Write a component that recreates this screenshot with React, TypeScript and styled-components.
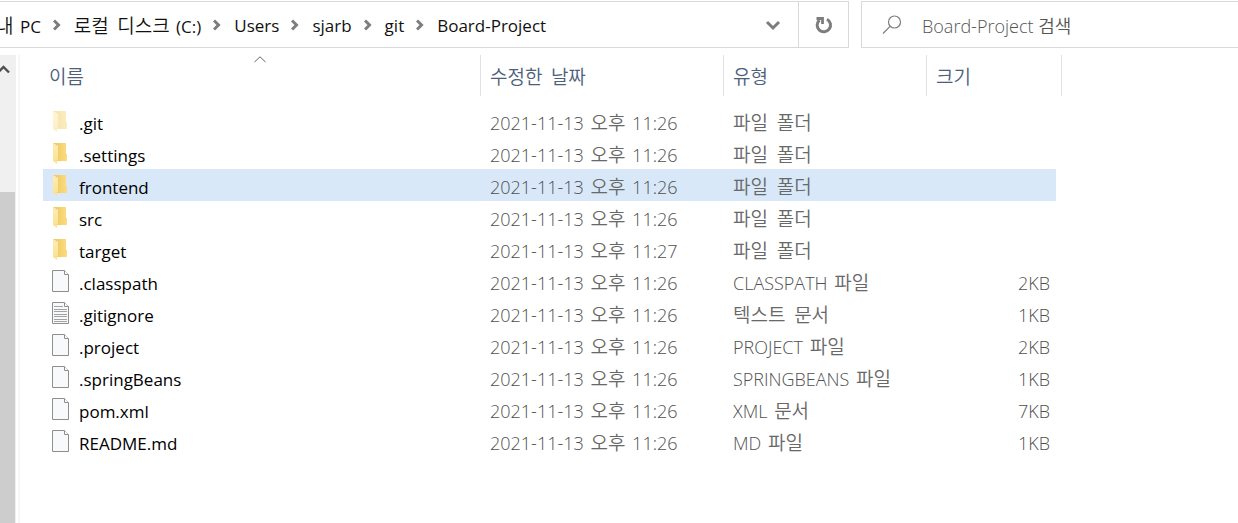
import React from 'react';
import styled, { createGlobalStyle } from 'styled-components';

const GlobalStyle = createGlobalStyle`
  *, *::before, *::after { box-sizing: border-box; }
  body {
    margin: 0;
    background: #ffffff;
    color: #000000;
    font-family: "Open Sans", "Noto Sans CJK KR", sans-serif;
    font-size: 17px;
    line-height: 24px;
  }
  button, input { font: inherit; color: inherit; }
`;

const Explorer = styled.div`
  display: flex;
  flex-direction: column;
  min-height: 100vh;
  overflow: hidden;
`;

const TopBar = styled.header`
  display: flex;
  gap: 12px;
  height: 48px;
  padding-top: 1px;
`;

const AddressBar = styled.nav`
  flex: 1;
  min-width: 0;
  display: flex;
  border: 1px solid #d9d9d9;
  border-left: 0;
`;

const Crumbs = styled.ol`
  flex: 1;
  min-width: 0;
  display: flex;
  align-items: center;
  gap: 12px;
  margin: 0 0 0 -4px;
  padding: 0;
  list-style: none;
  white-space: nowrap;
`;

const Crumb = styled.li`
  display: flex;
  align-items: center;
  gap: 13px;
`;

const CrumbLink = styled.a`
  padding-top: 2px;
  color: #111111;
  text-decoration: none;
`;

const BarButton = styled.button<{ $divided?: boolean }>`
  display: flex;
  align-items: center;
  justify-content: center;
  width: 50px;
  padding: 0;
  border: 0;
  border-left: ${(p) => (p.$divided ? '1px solid #d9d9d9' : '0')};
  background: none;
`;

const SearchBox = styled.label`
  display: flex;
  align-items: center;
  gap: 20px;
  width: 377px;
  padding-left: 20px;
  border: 1px solid #d9d9d9;
  border-right: 0;
`;

const SearchInput = styled.input`
  flex: 1;
  min-width: 0;
  padding: 3px 0 0;
  border: 0;
  outline: 0;
  background: none;
  font-size: 18px;
  font-weight: 350;
  &::placeholder { color: #555555; opacity: 1; }
`;

const Body = styled.div`
  flex: 1;
  display: flex;
  padding-top: 7px;
`;

const ScrollTrack = styled.div`
  display: flex;
  flex-direction: column;
  width: 16px;
  background: #f0f0f0;
`;

const ScrollUp = styled.button`
  display: flex;
  height: 137px;
  padding: 10px 0 0;
  border: 0;
  background: none;
`;

const ScrollThumb = styled.div`
  flex: 1;
  width: 15px;
  background: #cdcdcd;
`;

const Pane = styled.main`
  flex: 1;
  min-width: 0;
  margin-left: 2px;
  padding-left: 23px;
  border-left: 2px solid #f6f6f6;
`;

const FileTable = styled.table`
  table-layout: fixed;
  width: 1019px;
  border-collapse: separate;
  border-spacing: 0;
  tbody::before {
    content: "";
    display: block;
    height: 9px;
  }
`;

const Col = styled.col<{ $width: number }>`
  width: ${(p) => p.$width}px;
`;

const HeadCell = styled.th`
  position: relative;
  height: 41px;
  padding: 2px 0 0;
  border-right: 1px solid #e2e2e2;
  font-weight: 400;
  text-align: left;
`;

const SortButton = styled.button<{ $first?: boolean }>`
  width: 100%;
  padding: 0 0 0 ${(p) => (p.$first ? 6 : 9)}px;
  border: 0;
  background: none;
  color: #4c607a;
  text-align: left;
`;

const SortMark = styled.svg`
  position: absolute;
  top: 1px;
  left: 50%;
  margin-left: -8px;
`;

const Row = styled.tr<{ $selected?: boolean }>`
  background: ${(p) => (p.$selected ? '#d8e8f8' : 'transparent')};
`;

const Cell = styled.td`
  height: 32px;
  padding: 2px 0 0 9px;
  color: #505050;
  font-size: 18px;
  font-weight: 350;
  white-space: nowrap;
`;

const SizeCell = styled(Cell)`
  padding: 4px 6px 0 0;
  border-right: 6px solid #ffffff;
  text-align: right;
`;

const NameCell = styled(Cell)`
  color: #000000;
  font-size: 17px;
  font-weight: 400;
`;

const NameLine = styled.div`
  display: flex;
  align-items: center;
  gap: 9px;
`;

const FileName = styled.span`
  padding-top: 4px;
`;

const Hangul = styled.span<{ $before: boolean; $after: boolean }>`
  margin-left: ${(p) => (p.$before ? 2 : 0)}px;
  margin-right: ${(p) => (p.$after ? 2 : 0)}px;
  font-family: "Noto Sans CJK KR", sans-serif;
  font-size: 19px;
  font-weight: 350;
  ${Cell} & { color: #686868; }
`;

/* Hangul words are set slightly larger and looser to balance with the Latin letters. */
function Label({ text }: { text: string }) {
  const parts = text.split(/([\uac00-\ud7a3]+)/);
  return (
    <>
      {parts.map((part, i) =>
        i % 2 ? (
          <Hangul key={i} $before={parts[i - 1] !== ''} $after={parts[i + 1] !== ''}>
            {part}
          </Hangul>
        ) : (
          part
        ),
      )}
    </>
  );
}

type Kind = 'hidden' | 'folder' | 'file' | 'text';

function FileIcon({ kind }: { kind: Kind }) {
  if (kind === 'hidden' || kind === 'folder') {
    return (
      <svg width="18" height="24" viewBox="0 0 18 24" opacity={kind === 'hidden' ? 0.5 : 1} aria-hidden="true">
        <defs>
          <linearGradient id="back" x1="0" x2="1">
            <stop offset="0" stopColor="#edc75f" />
            <stop offset="1" stopColor="#fbdc80" />
          </linearGradient>
          <linearGradient id="flap" x1="0" x2="0" y1="0" y2="1">
            <stop offset="0" stopColor="#fdedb4" />
            <stop offset="1" stopColor="#fbe08d" />
          </linearGradient>
        </defs>
        <path d="M1 1H14V12H15V19H5L1 18Z" fill="url(#back)" />
        <path d="M1 1L6 4V17L5 18V22L1 19Z" fill="url(#flap)" />
      </svg>
    );
  }
  return (
    <svg width="18" height="24" viewBox="0 0 18 24" aria-hidden="true">
      <path d="M.5.5H12.500L16.500 4.500V21.500H.5Z" fill="#f7f9fa" stroke="#8e8e8e" />
      <path d="M12.500.5V4.500H16.500" fill="#ffffff" stroke="#8e8e8e" />
      {kind === 'text' && (
        <path d="M2 4.500H11M2 7.500H15M2 9.500H15M2 12.500H15M2 14.500H15M2 17.500H15M2 19.500H15" stroke="#a2a2a2" />
      )}
    </svg>
  );
}

function CrumbArrow() {
  return (
    <svg width="8" height="12" viewBox="0 0 8 12" fill="none" stroke="#7d7d7d" strokeWidth="3" aria-hidden="true">
      <path d="M1 1.500L5.500 6L1 10.500" />
    </svg>
  );
}

const crumbs = ['내 PC', '로컬 디스크 (C:)', 'Users', 'sjarb', 'git', 'Board-Project'];
const headings = ['이름', '수정한 날짜', '유형', '크기'];

const files: { name: string; kind: Kind; time: string; type: string; size?: string }[] = [
  { name: '.git', kind: 'hidden', time: '11:26', type: '파일 폴더' },
  { name: '.settings', kind: 'folder', time: '11:26', type: '파일 폴더' },
  { name: 'frontend', kind: 'folder', time: '11:26', type: '파일 폴더' },
  { name: 'src', kind: 'folder', time: '11:26', type: '파일 폴더' },
  { name: 'target', kind: 'folder', time: '11:27', type: '파일 폴더' },
  { name: '.classpath', kind: 'file', time: '11:26', type: 'CLASSPATH 파일', size: '2KB' },
  { name: '.gitignore', kind: 'text', time: '11:26', type: '텍스트 문서', size: '1KB' },
  { name: '.project', kind: 'file', time: '11:26', type: 'PROJECT 파일', size: '2KB' },
  { name: '.springBeans', kind: 'file', time: '11:26', type: 'SPRINGBEANS 파일', size: '1KB' },
  { name: 'pom.xml', kind: 'file', time: '11:26', type: 'XML 문서', size: '7KB' },
  { name: 'README.md', kind: 'file', time: '11:26', type: 'MD 파일', size: '1KB' },
];

export default function App() {
  return (
    <Explorer>
      <GlobalStyle />
      <TopBar>
        <AddressBar>
          <Crumbs>
            {crumbs.map((crumb, i) => (
              <Crumb key={crumb}>
                {i > 0 && <CrumbArrow />}
                <CrumbLink href="#"><Label text={crumb} /></CrumbLink>
              </Crumb>
            ))}
          </Crumbs>
          <BarButton aria-label="이전 위치">
            <svg width="16" height="12" viewBox="0 0 16 12" fill="none" stroke="#7d7d7d" strokeWidth="3">
              <path d="M2 3L8 9L14 3" />
            </svg>
          </BarButton>
          <BarButton $divided aria-label="새로 고침">
            <svg width="18" height="18" viewBox="0 0 18 18" fill="none" stroke="#7d7d7d">
              <path d="M12 3.200A6.700 6.700 0 1 1 4.500 4" strokeWidth="3" />
              <path d="M1.500 2.500H7.500V8" strokeWidth="2.800" />
            </svg>
          </BarButton>
        </AddressBar>
        <SearchBox>
          <svg width="20" height="20" viewBox="0 0 20 20" fill="none" stroke="#7d7d7d" strokeWidth="1.200" aria-hidden="true">
            <circle cx="12.500" cy="7" r="6" />
            <path d="M8.300 11.200L1 18.500" />
          </svg>
          <SearchInput type="text" aria-label="검색" placeholder="Board-Project 검색" />
        </SearchBox>
      </TopBar>
      <Body>
        <ScrollTrack>
          <ScrollUp aria-label="위로 스크롤">
            <svg width="10" height="9" viewBox="0 0 10 9" fill="none" stroke="#505050" strokeWidth="2.400">
              <path d="M-2 7.500L3.500 2L9 7.500" />
            </svg>
          </ScrollUp>
          <ScrollThumb />
        </ScrollTrack>
        <Pane>
          <FileTable>
            <colgroup>
              <Col $width={438} />
              <Col $width={243} />
              <Col $width={203} />
              <Col $width={135} />
            </colgroup>
            <thead>
              <tr>
                {headings.map((heading, i) => (
                  <HeadCell key={heading} scope="col" aria-sort={i === 0 ? 'ascending' : undefined}>
                    {i === 0 && (
                      <SortMark width="12" height="7" viewBox="0 0 12 7" fill="none" stroke="#666666" aria-hidden="true">
                        <path d="M.5 6L6 .8L11.500 6" />
                      </SortMark>
                    )}
                    <SortButton $first={i === 0}><Label text={heading} /></SortButton>
                  </HeadCell>
                ))}
              </tr>
            </thead>
            <tbody>
              {files.map((file) => (
                <Row key={file.name} $selected={file.name === 'frontend'}>
                  <NameCell>
                    <NameLine>
                      <FileIcon kind={file.kind} />
                      <FileName>{file.name}</FileName>
                    </NameLine>
                  </NameCell>
                  <Cell><Label text={`2021-11-13 오후 ${file.time}`} /></Cell>
                  <Cell><Label text={file.type} /></Cell>
                  <SizeCell>{file.size}</SizeCell>
                </Row>
              ))}
            </tbody>
          </FileTable>
        </Pane>
      </Body>
    </Explorer>
  );
}
